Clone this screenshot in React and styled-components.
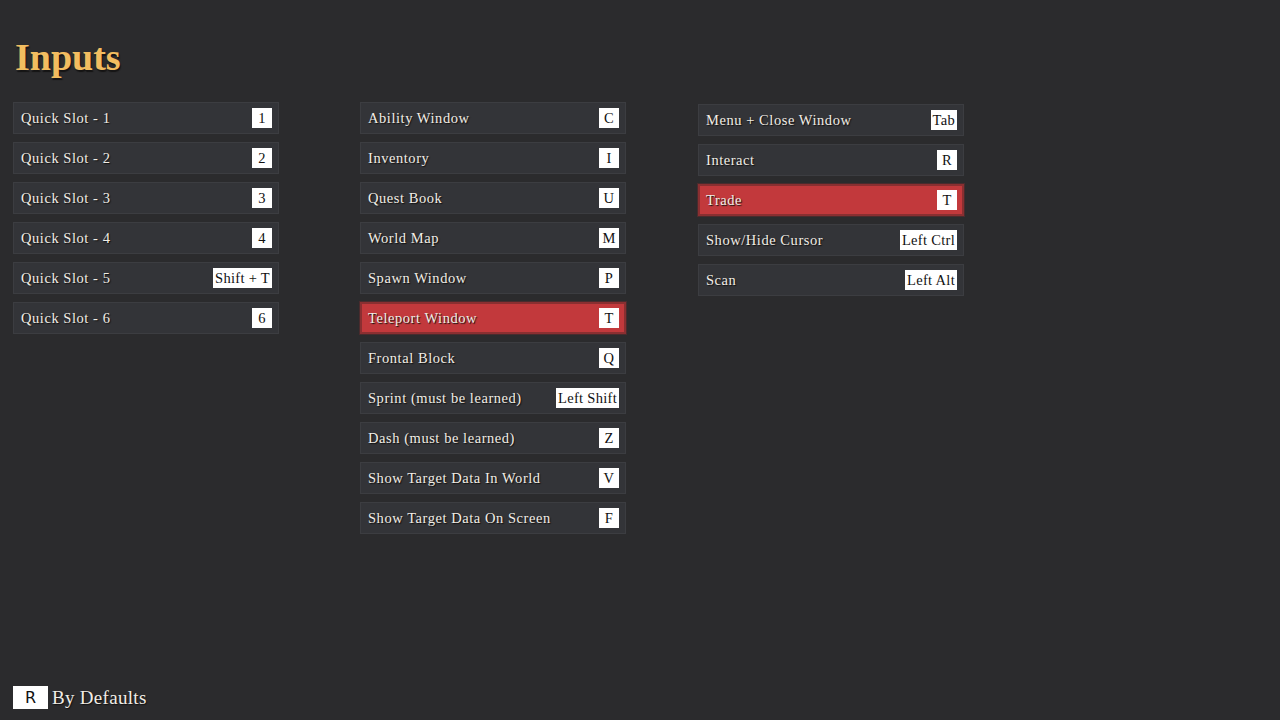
import React from 'react';
import styled, { createGlobalStyle } from 'styled-components';

const GlobalStyle = createGlobalStyle`
  html, body {
    margin: 0;
    padding: 0;
    background: #2b2b2d;
  }
  * {
    box-sizing: border-box;
  }
`;

const Page = styled.div`
  min-height: 100vh;
  display: flex;
  flex-direction: column;
  padding: 35px 0 11px 13px;
  font-family: 'Liberation Serif', 'DejaVu Serif', serif;
  color: #f1ede6;
`;

const Title = styled.h1`
  margin: 0 0 0 2px;
  font-size: 38px;
  line-height: 44px;
  font-weight: 700;
  letter-spacing: 0;
  color: #f2bd60;
  text-shadow: 1px 2px 1px #151414;
`;

const Columns = styled.div`
  display: flex;
  align-items: flex-start;
  margin-top: 23px;
`;

const Column = styled.div`
  width: 266px;
  display: flex;
  flex-direction: column;
  gap: 8px;
  margin-left: ${(p) => p.$left || 0}px;
  margin-top: ${(p) => p.$top || 0}px;
`;

const Row = styled.div`
  height: 32px;
  display: flex;
  align-items: center;
  justify-content: space-between;
  padding: ${(p) => (p.$active ? '0 5px 0 6px' : '0 6px 0 7px')};
  background: ${(p) => (p.$active ? '#c2393c' : '#333438')};
  border: ${(p) => (p.$active ? '2px solid #8a2f31' : '1px solid #3c3d41')};
  box-shadow: ${(p) => (p.$active ? '0 0 0 1px #4a2b2d' : 'none')};
`;

const Label = styled.span`
  font-size: 14.5px;
  line-height: 18px;
  letter-spacing: 0.55px;
  color: #f1ede6;
  text-shadow: 1px 1px 1px #111;
  white-space: nowrap;
`;

const Key = styled.span`
  min-width: 20px;
  height: 20px;
  padding: 0 2px;
  display: flex;
  align-items: center;
  justify-content: center;
  background: #ffffff;
  color: #111;
  font-size: 14.5px;
  letter-spacing: 0.3px;
  white-space: nowrap;
`;

const Footer = styled.div`
  margin-top: auto;
  display: flex;
  align-items: center;
  gap: 4px;
`;

const ResetKey = styled.span`
  width: 35px;
  height: 23px;
  display: flex;
  align-items: center;
  justify-content: center;
  background: #ffffff;
  color: #111;
  font-family: 'DejaVu Sans', 'Liberation Sans', sans-serif;
  font-size: 16px;
`;

const FooterText = styled.span`
  font-size: 19px;
  letter-spacing: 0.3px;
  color: #f1ede6;
  text-shadow: 1px 1px 1px #111;
`;

const columns = [
  {
    left: 0,
    top: 0,
    rows: [
      ['Quick Slot - 1', '1'],
      ['Quick Slot - 2', '2'],
      ['Quick Slot - 3', '3'],
      ['Quick Slot - 4', '4'],
      ['Quick Slot - 5', 'Shift + T'],
      ['Quick Slot - 6', '6'],
    ],
  },
  {
    left: 81,
    top: 0,
    rows: [
      ['Ability Window', 'C'],
      ['Inventory', 'I'],
      ['Quest Book', 'U'],
      ['World Map', 'M'],
      ['Spawn Window', 'P'],
      ['Teleport Window', 'T', true],
      ['Frontal Block', 'Q'],
      ['Sprint (must be learned)', 'Left Shift'],
      ['Dash (must be learned)', 'Z'],
      ['Show Target Data In World', 'V'],
      ['Show Target Data On Screen', 'F'],
    ],
  },
  {
    left: 72,
    top: 2,
    rows: [
      ['Menu + Close Window', 'Tab'],
      ['Interact', 'R'],
      ['Trade', 'T', true],
      ['Show/Hide Cursor', 'Left Ctrl'],
      ['Scan', 'Left Alt'],
    ],
  },
];

export default function App() {
  return (
    <>
      <GlobalStyle />
      <Page>
        <Title>Inputs</Title>
        <Columns>
          {columns.map((col, i) => (
            <Column key={i} $left={col.left} $top={col.top}>
              {col.rows.map(([label, key, active]) => (
                <Row key={label} $active={active}>
                  <Label>{label}</Label>
                  <Key>{key}</Key>
                </Row>
              ))}
            </Column>
          ))}
        </Columns>
        <Footer>
          <ResetKey>R</ResetKey>
          <FooterText>By Defaults</FooterText>
        </Footer>
      </Page>
    </>
  );
}
